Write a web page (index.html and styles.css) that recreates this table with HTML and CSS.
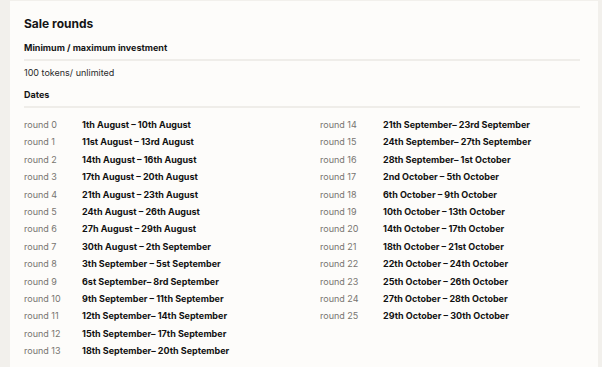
FILE: index.html
```html
<!DOCTYPE html>
<html lang="en">
<head>
    <meta charset="UTF-8">
    <title>Sale rounds</title>
    <link rel="stylesheet" href="styles.css">
</head>
<body>
    <div class="card">
        <h2 class="title">Sale rounds</h2>

        <div class="section">
            <h3>Minimum / maximum investment</h3>
        </div>
        <p class="value">100 tokens/ unlimited</p>

        <div class="section">
            <h3>Dates</h3>
        </div>

        <div class="rounds">
            <div class="col">
                <div class="row"><span class="label">round 0</span><span class="date">1th August – 10th August</span></div>
                <div class="row"><span class="label">round 1</span><span class="date">11st August – 13rd August</span></div>
                <div class="row"><span class="label">round 2</span><span class="date">14th August – 16th August</span></div>
                <div class="row"><span class="label">round 3</span><span class="date">17th August – 20th August</span></div>
                <div class="row"><span class="label">round 4</span><span class="date">21th August – 23th August</span></div>
                <div class="row"><span class="label">round 5</span><span class="date">24th August – 26th August</span></div>
                <div class="row"><span class="label">round 6</span><span class="date">27h August – 29th August</span></div>
                <div class="row"><span class="label">round 7</span><span class="date">30th August – 2th September</span></div>
                <div class="row"><span class="label">round 8</span><span class="date">3th September – 5st September</span></div>
                <div class="row"><span class="label">round 9</span><span class="date">6st September– 8rd September</span></div>
                <div class="row"><span class="label">round 10</span><span class="date">9th September – 11th September</span></div>
                <div class="row"><span class="label">round 11</span><span class="date">12th September– 14th September</span></div>
                <div class="row"><span class="label">round 12</span><span class="date">15th September– 17th September</span></div>
                <div class="row"><span class="label">round 13</span><span class="date">18th September– 20th September</span></div>
            </div>
            <div class="col right">
                <div class="row"><span class="label">round 14</span><span class="date">21th September– 23rd September</span></div>
                <div class="row"><span class="label">round 15</span><span class="date">24th September– 27th September</span></div>
                <div class="row"><span class="label">round 16</span><span class="date">28th September– 1st October</span></div>
                <div class="row"><span class="label">round 17</span><span class="date">2nd October – 5th October</span></div>
                <div class="row"><span class="label">round 18</span><span class="date">6th October – 9th October</span></div>
                <div class="row"><span class="label">round 19</span><span class="date">10th October – 13th October</span></div>
                <div class="row"><span class="label">round 20</span><span class="date">14th October – 17th October</span></div>
                <div class="row"><span class="label">round 21</span><span class="date">18th October – 21st October</span></div>
                <div class="row"><span class="label">round 22</span><span class="date">22th October – 24th October</span></div>
                <div class="row"><span class="label">round 23</span><span class="date">25th October – 26th October</span></div>
                <div class="row"><span class="label">round 24</span><span class="date">27th October – 28th October</span></div>
                <div class="row"><span class="label">round 25</span><span class="date">29th October – 30th October</span></div>
            </div>
        </div>
    </div>
</body>
</html>
```

FILE: styles.css
```css
body, html {
    margin: 0;
    padding: 0;
    background-color: #f2f0ec;
    font-family: "Inter", "Liberation Sans", sans-serif;
    color: #151515;
    overflow: hidden;
}
.card {
    margin: 1px 0 0 10px;
    width: 588px;
    height: 366px;
    box-sizing: border-box;
    padding: 15px 18px 0 14px;
    background-color: #fdfcfa;
}
.title {
    margin: 0;
    font-size: 12px;
    line-height: 16px;
    font-weight: 700;
}
.section {
    border-bottom: 2px solid #efede9;
}
.section h3 {
    margin: 0;
    font-size: 9px;
    line-height: 12px;
    font-weight: 700;
    padding-bottom: 5px;
}
.title + .section {
    margin-top: 10px;
}
.value {
    margin: 6px 0 0 0;
    font-size: 9px;
    line-height: 12px;
    color: #2a2a2a;
}
.value + .section {
    margin-top: 10px;
}
.rounds {
    display: grid;
    grid-template-columns: 296px 1fr;
    margin-top: 8px;
}
.row {
    display: flex;
    font-size: 9px;
    line-height: 17.4px;
}
.label {
    width: 58px;
    color: #777470;
}
.right .label {
    width: 63px;
}
.date {
    font-weight: 700;
    color: #111;
}
```
